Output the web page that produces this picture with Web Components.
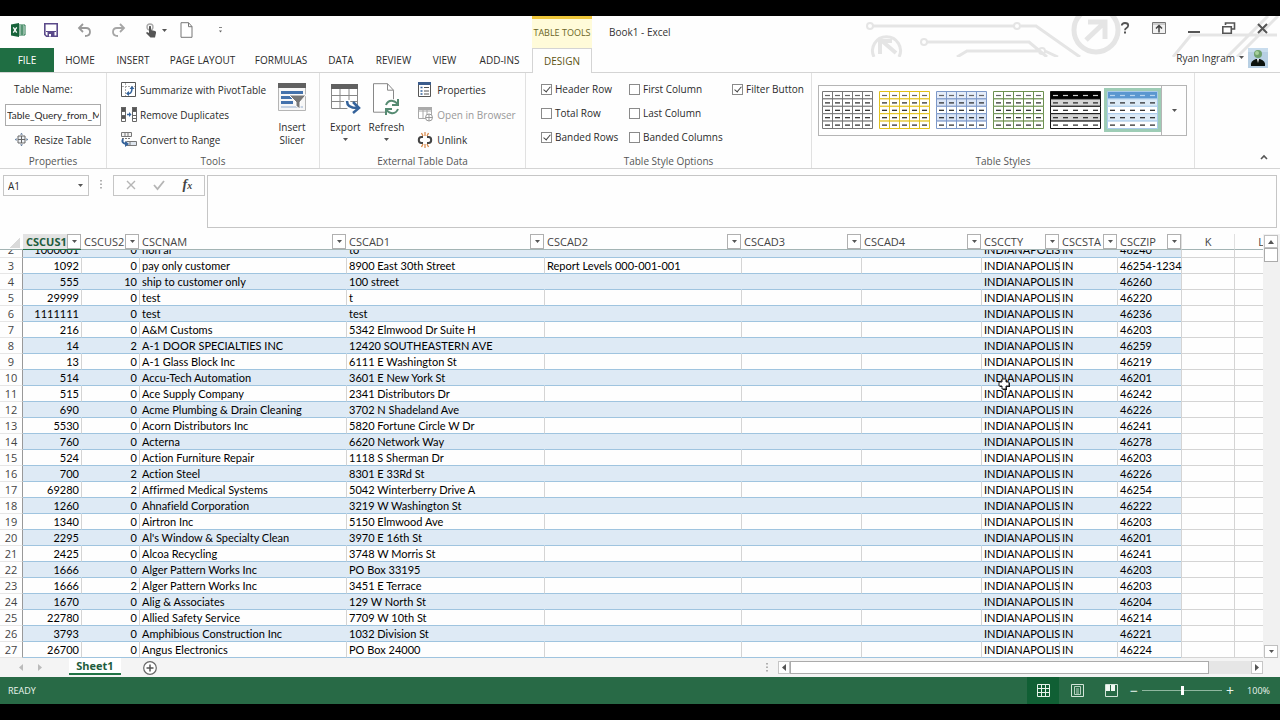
<!DOCTYPE html>
<html lang="en">
<head>
<meta charset="utf-8">
<title>Book1 - Excel</title>
<style>
  body {
    margin: 0;
    background: #000;
    font: 11px/16px "Open Sans", "Noto Sans", sans-serif;
    color: #2b2b2b;
  }
</style>
</head>
<body>
<xl-app></xl-app>

<script>
const icons = {
  excel: [14, 14, `<path d="M7 2h7v10H7z" fill="#fff" stroke="#1f7246"/><path d="M8 4h5M8 6h5M8 8h5M8 10h5M11 2v10" stroke="#1f7246"/><path d="M0 1.5 8 0v14l-8-1.5z" fill="#17633a"/><path d="m2.300 4.300 3.400 5.400m0-5.400L2.300 9.700" stroke="#fff" stroke-width="1.300"/>`],
  save: [14, 14, `<path d="M.8.8h12.400v12.400H2.500L.8 11.500z" fill="#fff" stroke="#5b4a8a" stroke-width="1.600"/><path d="M2 8.500h10" stroke="#5b4a8a"/><path d="M3.500 9h7v4.500h-7z" fill="#5b4a8a"/><path d="M5 11h2v2.500H5z" fill="#fff"/>`],
  undo: [15, 14, `<path d="M6 1 2 5l4 4M2.500 5H9q4 0 4 4t-5 4" fill="none" stroke="#9a9a9a" stroke-width="1.800"/>`],
  redo: [15, 14, `<path d="m9 1 4 4-4 4m3.500-4H6Q2 5 2 9t5 4" fill="none" stroke="#a6a6a6" stroke-width="1.800"/>`],
  touch: [12, 15, `<circle cx="5" cy="4" r="3" fill="none" stroke="#aaa" stroke-width="1.400"/><path d="M4 3.500q1-1.500 2 0V7l4 1q1.500.5 1 2l-1 4.500H5.500L1 10l1-1 2 1z" fill="#555"/>`],
  page: [13, 16, `<path d="M1 .7h7.500L12 4.500v10.800H1z" fill="#fff" stroke="#777"/><path d="M8.500.7v4H12" fill="none" stroke="#777"/>`],
  more: [5, 6, `<path d="M1 .5h3" stroke="#888"/><path d="M1 3.500h3l-1.500 2z" fill="#666"/>`],
  drop: [5, 3, `<path d="M0 0h5L2.500 3z" fill="#555"/>`],
  help: [10, 12, `<path d="M1.800 3.500Q1.800 1 5 1t3.200 2.400Q8.200 4.800 6.500 6 5 6.800 5 8.200" fill="none" stroke="#555" stroke-width="1.800"/><path d="M4 9.500h2v2H4z" fill="#555"/>`],
  display: [14, 12, `<path d="M.5.5h13v11H.5z" fill="#f2f2f2" stroke="#777"/><path d="M1 2h12" stroke="#aaa"/><path d="M7 10.500V4M4 6.500 7 3.500l3 3" fill="none" stroke="#444" stroke-width="1.500"/>`],
  minimize: [12, 12, `<path d="M0 10h12" stroke="#555" stroke-width="2"/>`],
  restore: [13, 12, `<path d="M3.500 3V1h9v6H10" fill="none" stroke="#555" stroke-width="1.600"/><path d="M.8 4.800h8.500v6.400H.8z" fill="#fff" stroke="#555" stroke-width="1.600"/>`],
  close: [11, 11, `<path d="m1 1 9 9m0-9-9 9" stroke="#555" stroke-width="2"/>`],
  avatar: [20, 20, `<path d="M0 0h20v20H0z" fill="#b7cfe3"/><path d="M0 0h20v4H0z" fill="#c8dced"/><path d="M3 18q-1-5 5-7h4q6 2 5 7z" fill="#0c120d"/><circle cx="10" cy="6" r="4" fill="#6fa06c"/><circle cx="9" cy="5" r="2" fill="#a8d09b"/><path d="m9 11 1 4 1-4z" fill="#fff"/>`],
  resize: [13, 13, `<path d="M3 3h7v7H3zM3 6.500h7M6.500 3v7" fill="#eef2f6" stroke="#666"/><path d="m5 1.500 1.500-1.500L8 1.500zM5 11.500 6.500 13 8 11.500zM1.500 5 0 6.500 1.500 8zM11.500 5 13 6.500 11.500 8z" fill="#3c5d85"/>`],
  pivot: [15, 15, `<path d="M.5.5h14v14H.5z" fill="#fff" stroke="#555"/><path d="M4.500 1v13M1 4.500h13" stroke="#aaa" stroke-dasharray="2 1"/><path d="M6 11.500h2.500Q11 11 11 5.500" fill="none" stroke="#35639b" stroke-width="1.600"/><path d="m8.500 7 2.500-3 2.500 3zM8 9l-3 2.500L8 14z" fill="#35639b"/>`],
  duplicates: [16, 15, `<path d="M0 0h5v4H0zM0 9h5v3H0zM11 0h5v4h-5z" fill="#555"/><path d="M.5.5h4v14h-4zM.5 4.500h4m-4 4h4m-4 3h4m7-11h4v14h-4zm0 4h4m-4 4h4m-4 3h4" fill="none" stroke="#666"/><path d="M6 7.500h3" stroke="#35639b" stroke-width="1.500"/><path d="m8 5 2.500 2.500L8 10z" fill="#35639b"/>`],
  range: [16, 15, `<path d="M.5.5h10v4H.5zM4 .5v4M7 .5v4" fill="#f4f4f4" stroke="#777"/><path d="M1 6.500h8" stroke="#777" stroke-dasharray="2 1"/><path d="M5.500 9.500h10v4h-10zM9 9.500v4" fill="#dfe6ef" stroke="#777"/><path d="M2 7q-2 4 3 5" fill="none" stroke="#35639b" stroke-width="2"/><path d="m4 9 4 3-4 3z" fill="#35639b"/>`],
  slicer: [28, 28, `<path d="M.5.5h27v27H.5z" fill="#f7f7f7" stroke="#b5b5b5"/><path d="M0 0h28v5H0z" fill="#606060"/><path d="M3 8h22v3H3zM3 13h13v3H3zM3 18h12v3H3z" fill="#4472ac"/><path d="M3 23h22v2H3z" fill="#c6d2e2"/><path d="M11 12h17l-6 7v7l-4-3v-4z" fill="#777" stroke="#fff"/>`],
  export: [30, 31, `<path d="M1.500 5.500h26v20h-26zM1.500 12.500h26m-26 6h26M10 5.500v20m9-20v20" fill="#fff" stroke="#888"/><path d="M1 1h27v5H1z" fill="#606060"/><path d="M17 17q0 8 9 8" fill="none" stroke="#fff" stroke-width="6"/><path d="M17 18q0 7 10 7M23 19l6 6-6 5" fill="none" stroke="#35639b" stroke-width="2.500"/>`],
  refresh: [28, 32, `<path d="M1.500.7h14l6 6.500v22h-20z" fill="#fff" stroke="#888"/><path d="M15.500.7v6.500h6" fill="none" stroke="#888"/><circle cx="20" cy="24" r="8" fill="#fff"/><path d="M14 22q2-5 7-4 3 .5 5 4m0-6v6h-6M26 26q-2 5-7 4-3-.5-5-4m0 6v-6h6" fill="none" stroke="#568b72" stroke-width="2"/>`],
  properties: [13, 15, `<path d="M.5.5h12v14H.5z" fill="#fff" stroke="#555"/><path d="M0 0h13v3H0z" fill="#3b5c8c"/><path d="M2.500 5.500h2m-2 3.500h2m-2 3h2" stroke="#35639b" stroke-width="1.500"/><path d="M6 5.500h5M6 9h5m-5 3h5" stroke="#555"/>`],
  browser: [15, 15, `<path d="M.5.5h13v11H.5zM5 .5v11M9 .5v11M.5 4h13" fill="#fff" stroke="#a8a8a8"/><path d="M0 0h14v3H0z" fill="#aaa"/><circle cx="11" cy="10.500" r="3.500" fill="#fff" stroke="#999"/><path d="M7.500 10.500h7M11 7v7" stroke="#999"/>`],
  unlink: [14, 16, `<path d="M5 5H3.500Q.8 5 .8 8t2.700 3H5m4-6h1.500q2.700 0 2.700 3t-2.700 3H9" fill="none" stroke="#444" stroke-width="2"/><path d="M7 0v4M3.500 1 5 4m5.500-3L9 4M7 12v4M3.500 15 5 12m5.500 3L9 12" stroke="#d98544" stroke-width="1.200"/>`],
  collapse: [8, 6, `<path d="m1 5 3-3 3 3" fill="none" stroke="#555" stroke-width="1.600"/>`],
  cancel: [10, 10, `<path d="m1 1 8 8m0-8L1 9" stroke="#b5b5b5" stroke-width="1.400"/>`],
  accept: [12, 10, `<path d="m1 5 3.500 4L11 1" fill="none" stroke="#b5b5b5" stroke-width="1.800"/>`],
  dots: [2, 10, `<path d="M1 0v10" stroke="#999" stroke-width="1.500" stroke-dasharray="1.500 2"/>`],
  up: [6, 4, `<path d="M0 4h6L3 0z" fill="#555"/>`],
  left: [4, 7, `<path d="M4 0v7L0 3.500z" fill="currentColor"/>`],
  right: [4, 7, `<path d="M0 0v7l4-3.500z" fill="currentColor"/>`],
  add: [14, 14, `<circle cx="7" cy="7" r="6.300" fill="#fff" stroke="#666" stroke-width="1.200"/><path d="M7 3.500v7M3.500 7h7" stroke="#555" stroke-width="1.500"/>`],
  normal: [13, 13, `<path d="M.5.5h12v12H.5zM4.500.5v12m4-12v12M.5 4.500h12m-12 4h12" fill="none" stroke="#e6f3ea"/>`],
  layout: [13, 13, `<path d="M.5.5h12v12H.5z" fill="none" stroke="#d3e5d9"/><path d="M3.500 2.500h6v8h-6zM5 5h3M5 7h3M5 9h3" fill="none" stroke="#b6d1c0"/>`],
  breaks: [13, 13, `<path d="M.5.5h12v12H.5z" fill="none" stroke="#d3e5d9"/><path d="M1 1h4v6H1zM6 1h4v6H6z" fill="#f1f9f3"/>`],
  cross: [13, 14, `<path d="M5 2h4v3h3v4H9v3H5V9H2V5h3z" fill="#111"/><path d="M4 1h4v3h3v4H8v3H4V8H1V4h3z" fill="#fff" stroke="#222"/>`],
};

class XlIcon extends HTMLElement {
  constructor() {
    super();
    this.attachShadow({ mode: 'open' });
  }

  connectedCallback() {
    const [width, height, body] = icons[this.getAttribute('name')];
    this.shadowRoot.innerHTML = `
      <style>
        :host { display: inline-flex; flex: none; }
        svg { display: block; overflow: visible; }
      </style>
      <svg width="${width}" height="${height}" viewBox="0 0 ${width} ${height}" aria-hidden="true">${body}</svg>
    `;
  }
}
customElements.define('xl-icon', XlIcon);

// Base for the static parts: each subclass supplies its own template
class XlElement extends HTMLElement {
  constructor() {
    super();
    this.attachShadow({ mode: 'open' });
  }

  connectedCallback() {
    this.shadowRoot.innerHTML = `
      <style>
        *, ::before, ::after { box-sizing: border-box; }
        button, input, textarea { font: inherit; color: inherit; margin: 0; border-radius: 0; }
        button { padding: 0; border: 0; background: none; }
        ${this.css}
      </style>
      ${this.template}
    `;
  }
}

customElements.define('xl-title-bar', class extends XlElement {
  get css() {
    return `
      :host { display: flex; height: 32px; position: relative; color: #333; }
      .quick { flex: 0 0 532px; display: flex; align-items: center; padding: 0 0 4px 11px; gap: 19px; }
      .quick button, .last { display: flex; align-items: center; gap: 5px; }
      .last { gap: 13px; }
      .more { margin-left: 12px; }
      .context {
        flex: 0 0 60px;
        border-top: 3px solid #eec63a;
        background: #fffbd9;
        color: #6b6426;
        text-align: center;
        font-size: 9px;
        line-height: 27px;
        white-space: nowrap;
      }
      h1 { margin: 0 auto 0 17px; font-size: 10px; font-weight: 400; line-height: 32px; }
      .window { display: flex; align-items: center; gap: 22px; padding: 0 12px 4px 0; }
    `;
  }

  get template() {
    return `
      <div class="quick">
        <xl-icon name="excel"></xl-icon>
        <button type="button" aria-label="Save"><xl-icon name="save"></xl-icon></button>
        <button type="button" aria-label="Undo"><xl-icon name="undo"></xl-icon></button>
        <button type="button" aria-label="Redo"><xl-icon name="redo"></xl-icon></button>
        <div class="last">
          <button type="button" aria-label="Touch mode"><xl-icon name="touch"></xl-icon><xl-icon name="drop"></xl-icon></button>
          <button type="button" aria-label="New"><xl-icon name="page"></xl-icon></button>
          <button class="more" type="button" aria-label="Customize"><xl-icon name="more"></xl-icon></button>
        </div>
      </div>
      <div class="context">TABLE TOOLS</div>
      <h1>Book1 - Excel</h1>
      <div class="window">
        <button type="button" aria-label="Help"><xl-icon name="help"></xl-icon></button>
        <button type="button" aria-label="Ribbon display options"><xl-icon name="display"></xl-icon></button>
        <button type="button" aria-label="Minimize"><xl-icon name="minimize"></xl-icon></button>
        <button type="button" aria-label="Restore"><xl-icon name="restore"></xl-icon></button>
        <button type="button" aria-label="Close"><xl-icon name="close"></xl-icon></button>
      </div>
    `;
  }
});

customElements.define('xl-tabs', class extends XlElement {
  get css() {
    return `
      :host { display: flex; height: 25px; position: relative; border-bottom: 1px solid #d4d4d4; }
      nav { display: grid; grid-template-columns: 54px 52px 54px 85px 72px 48px 57px 45px 65px 60px; }
      nav button { height: 24px; font-size: 10px; white-space: nowrap; color: #2b2b2b; }
      nav .file { background: #1f6e43; color: #fff; }
      nav .active { height: 25px; border: 1px solid #d4d4d4; border-bottom: 0; background: #fefefe; color: #5c5412; }
      .user { margin-left: auto; padding: 0 12px 5px 0; display: flex; align-items: center; gap: 4px; color: #333; font-size: 10px; }
    `;
  }

  get template() {
    const tabs = ['HOME', 'INSERT', 'PAGE LAYOUT', 'FORMULAS', 'DATA', 'REVIEW', 'VIEW', 'ADD-INS'];
    return `
      <nav>
        <button class="file" type="button">FILE</button>
        ${tabs.map((tab) => `<button type="button">${tab}</button>`).join('')}
        <button class="active" type="button">DESIGN</button>
      </nav>
      <button class="user" type="button">Ryan Ingram <xl-icon name="drop"></xl-icon><xl-icon name="avatar"></xl-icon></button>
    `;
  }
});

customElements.define('xl-group', class extends XlElement {
  get css() {
    return `
      :host {
        display: flex;
        flex-direction: column;
        flex: none;
        box-sizing: border-box;
        width: var(--group-width);
        padding-top: 4px;
        border-right: 1px solid #e1e1e1;
      }
      .body { display: flex; flex: none; height: 76px; }
      .caption { text-align: center; font-size: 10px; line-height: 16px; color: #555; }
    `;
  }

  get template() {
    return `
      <div class="body"><slot></slot></div>
      <div class="caption">${this.getAttribute('caption')}</div>
    `;
  }
});

customElements.define('xl-command', class extends XlElement {
  get css() {
    return `
      :host { display: block; }
      button { display: flex; align-items: center; gap: 3px; height: 25px; white-space: nowrap; font-size: 10px; }
      button:disabled { color: #999; }
      .icon { display: flex; min-width: 16px; }
      :host([large]) button { flex-direction: column; gap: 0; height: 76px; padding-top: 6px; line-height: 13px; }
      :host([large]) .icon { height: 38px; }
      :host([large]) xl-icon[name=drop] { margin-top: 4px; }
    `;
  }

  get template() {
    return `
      <button type="button" ${this.hasAttribute('disabled') ? 'disabled' : ''}>
        <span class="icon"><xl-icon name="${this.getAttribute('icon')}"></xl-icon></span>
        <span><slot></slot></span>
        ${this.hasAttribute('menu') ? '<xl-icon name="drop"></xl-icon>' : ''}
      </button>
    `;
  }
});

customElements.define('xl-check', class extends XlElement {
  get css() {
    return `
      :host { display: block; }
      label { display: flex; align-items: center; gap: 3px; height: 24px; font-size: 10px; white-space: nowrap; }
      input {
        appearance: none;
        width: 11px;
        height: 11px;
        border: 1px solid #8a8a8a;
        background: #fff;
        display: grid;
        place-content: center;
      }
      input:checked::before {
        content: "";
        width: 4px;
        height: 7px;
        border: solid #444;
        border-width: 0 1px 1px 0;
        transform: translateY(-1px) rotate(40deg);
      }
    `;
  }

  get template() {
    return `<label><input type="checkbox" ${this.hasAttribute('checked') ? 'checked' : ''}><slot></slot></label>`;
  }
});

customElements.define('xl-table-style', class extends XlElement {
  get css() {
    return `
      :host { display: block; }
      button { display: block; padding: 3px; background: #fff; }
      :host([selected]) button { background: #9dccb5; }
      svg { display: block; }
    `;
  }

  get template() {
    const line = this.getAttribute('line');
    const head = this.getAttribute('head') || '#fff';
    const band = this.getAttribute('band') || '#fff';
    const dash = this.getAttribute('dash') || '#666';
    let rows = '';
    for (let row = 0; row < 5; row++) {
      const y = row * 7.4 + 0.5;
      const fill = row === 0 ? head : row % 2 ? band : '#fff';
      rows += `<path d="M.5 ${y}h50v7.400H.5z" fill="${fill}" stroke="${line}"/>`;
      for (let col = 0; col < 5; col++) {
        rows += `<path d="M${col * 10 + 3} ${y + 4}h5" stroke="${row === 0 ? dash : '#222'}" stroke-width="1.200"/>`;
      }
    }
    const columns = this.hasAttribute('columns')
      ? `<path d="M10.500 0v38M20.500 0v38M30.500 0v38M40.500 0v38" stroke="${line}"/>` : '';
    return `
      <button type="button" aria-label="${this.getAttribute('label')}">
        <svg width="51" height="38" viewBox="0 0 51 38">${rows}${columns}</svg>
      </button>
    `;
  }
});

customElements.define('xl-ribbon', class extends XlElement {
  get css() {
    return `
      :host { display: flex; height: 96px; border-bottom: 1px solid #d4d4d4; }
      .name { padding: 0 5px; width: 106px; font-size: 10px; }
      .name label { display: block; line-height: 25px; padding-left: 9px; }
      .name input { display: block; width: 96px; height: 22px; margin: 2px 0 1px; padding: 0 1px; border: 1px solid #ababab; font-family: Lato, sans-serif; font-size: 10px; }
      .name xl-command { padding-left: 10px; }
      .tools { flex: none; padding-left: 14px; width: 171px; }
      .external { padding: 0 14px 0 10px; display: flex; gap: 8px; }
      .options { display: grid; grid-template-columns: 88px 103px 1fr; padding-left: 15px; }
      .gallery {
        display: flex;
        height: 51px;
        margin: 8px 0 0 6px;
        padding: 2px 0 0 0;
        border: 1px solid #b5b5b5;
      }
      .gallery > button { width: 25px; margin-top: -2px; border-left: 1px solid #b5b5b5; display: grid; place-content: center; }
      .collapse { margin: auto 12px 4px auto; }
    `;
  }

  get template() {
    return `
      <xl-group caption="Properties" style="--group-width: 107px">
        <div class="name">
          <label for="table-name">Table Name:</label>
          <input id="table-name" type="text" value="Table_Query_from_M">
          <xl-command icon="resize">Resize Table</xl-command>
        </div>
      </xl-group>
      <xl-group caption="Tools" style="--group-width: 213px">
        <div class="tools">
          <xl-command icon="pivot">Summarize with PivotTable</xl-command>
          <xl-command icon="duplicates">Remove Duplicates</xl-command>
          <xl-command icon="range">Convert to Range</xl-command>
        </div>
        <xl-command large icon="slicer">Insert<br>Slicer</xl-command>
      </xl-group>
      <xl-group caption="External Table Data" style="--group-width: 206px">
        <div class="external">
          <xl-command large menu icon="export">Export</xl-command>
          <xl-command large menu icon="refresh">Refresh</xl-command>
        </div>
        <div>
          <xl-command icon="properties">Properties</xl-command>
          <xl-command icon="browser" disabled>Open in Browser</xl-command>
          <xl-command icon="unlink">Unlink</xl-command>
        </div>
      </xl-group>
      <xl-group caption="Table Style Options" style="--group-width: 286px">
        <div class="options">
          <div>
            <xl-check checked>Header Row</xl-check>
            <xl-check>Total Row</xl-check>
            <xl-check checked>Banded Rows</xl-check>
          </div>
          <div>
            <xl-check>First Column</xl-check>
            <xl-check>Last Column</xl-check>
            <xl-check>Banded Columns</xl-check>
          </div>
          <xl-check checked>Filter Button</xl-check>
        </div>
      </xl-group>
      <xl-group caption="Table Styles" style="--group-width: 383px">
        <div class="gallery">
          <xl-table-style label="Light" line="#777" columns></xl-table-style>
          <xl-table-style label="Yellow" line="#e0c01c" columns></xl-table-style>
          <xl-table-style label="Blue" line="#7c98c8" band="#dbe5f6" head="#e6edf9" columns></xl-table-style>
          <xl-table-style label="Green" line="#6d9150" columns></xl-table-style>
          <xl-table-style label="Black" line="#111" head="#000" band="#d5d5d5" dash="#ccc"></xl-table-style>
          <xl-table-style label="Light blue" line="#a9cbea" head="#5b97d0" band="#ddebf7" dash="#b8d5ef" selected></xl-table-style>
          <button type="button" aria-label="More styles"><xl-icon name="drop"></xl-icon></button>
        </div>
      </xl-group>
      <button class="collapse" type="button" aria-label="Collapse ribbon"><xl-icon name="collapse"></xl-icon></button>
    `;
  }
});

customElements.define('xl-formula-bar', class extends XlElement {
  get css() {
    return `
      :host { display: flex; align-items: flex-start; padding: 6px 3px 6px; height: 65px; box-sizing: border-box; }
      .name-box, .actions { display: flex; align-items: center; height: 21px; border: 1px solid #c6c6c6; }
      .name-box { width: 86px; }
      .name-box input { flex: 1; min-width: 0; height: 16px; border: 0; padding: 0 4px; font-size: 10px; background: none; }
      .name-box button { display: flex; padding: 0 5px; }
      .dots { margin: 5px 11px 0; }
      .actions { width: 92px; justify-content: space-around; padding: 0 3px; margin-right: 2px; }
      .fx { font: italic 700 14px/16px "Liberation Serif", serif; color: #444; }
      .fx small { font-size: 10px; }
      textarea { flex: 1; height: 53px; resize: none; border: 1px solid #c6c6c6; background: #fefefe; }
    `;
  }

  get template() {
    return `
      <div class="name-box">
        <input type="text" value="A1" aria-label="Name box">
        <button type="button" aria-label="Names"><xl-icon name="drop"></xl-icon></button>
      </div>
      <xl-icon class="dots" name="dots"></xl-icon>
      <div class="actions">
        <button type="button" aria-label="Cancel"><xl-icon name="cancel"></xl-icon></button>
        <button type="button" aria-label="Enter"><xl-icon name="accept"></xl-icon></button>
        <button class="fx" type="button">f<small>x</small></button>
      </div>
      <textarea aria-label="Formula"></textarea>
    `;
  }
});

const columns = [
  ['CSCUS1', 58], ['CSCUS2', 58], ['CSCNAM', 207], ['CSCAD1', 198], ['CSCAD2', 197], ['CSCAD3', 120],
  ['CSCAD4', 120], ['CSCCTY', 78], ['CSCSTA', 58], ['CSCZIP', 64],
];

// cus1 | cus2 | name | address 1 | zip | address 2
const customers = `1000001|0|non ar|to|46240
1092|0|pay only customer|8900 East 30th Street|46254-1234|Report Levels 000-001-001
555|10|ship to customer only|100 street|46260
29999|0|test|t|46220
1111111|0|test|test|46236
216|0|A&amp;M Customs|5342 Elmwood Dr Suite H|46203
14|2|A-1 DOOR SPECIALTIES INC|12420 SOUTHEASTERN AVE|46259
13|0|A-1 Glass Block Inc|6111 E Washington St|46219
514|0|Accu-Tech Automation|3601 E New York St|46201
515|0|Ace Supply Company|2341 Distributors Dr|46242
690|0|Acme Plumbing &amp; Drain Cleaning|3702 N Shadeland Ave|46226
5530|0|Acorn Distributors Inc|5820 Fortune Circle W Dr|46241
760|0|Acterna|6620 Network Way|46278
524|0|Action Furniture Repair|1118 S Sherman Dr|46203
700|2|Action Steel|8301 E 33Rd St|46226
69280|2|Affirmed Medical Systems|5042 Winterberry Drive A|46254
1260|0|Ahnafield Corporation|3219 W Washington St|46222
1340|0|Airtron Inc|5150 Elmwood Ave|46203
2295|0|Al's Window &amp; Specialty Clean|3970 E 16th St|46201
2425|0|Alcoa Recycling|3748 W Morris St|46241
1666|0|Alger Pattern Works Inc|PO Box 33195|46203
1666|2|Alger Pattern Works Inc|3451 E Terrace|46203
1670|0|Alig &amp; Associates|129 W North St|46204
22780|0|Allied Safety Service|7709 W 10th St|46214
3793|0|Amphibious Construction Inc|1032 Division St|46221
26700|0|Angus Electronics|PO Box 24000|46224`.split('\n').map((row) => row.split('|'));

customElements.define('xl-grid', class extends XlElement {
  scrollRows(offset) {
    this.shadowRoot.querySelector('.sheet').scrollTop = offset;
  }

  get css() {
    return `
      :host { display: flex; position: relative; }
      .sheet { flex: 1; min-width: 0; overflow: hidden; }
      table { table-layout: fixed; border-collapse: separate; border-spacing: 0; width: 1287px; }
      th, td { height: 16px; padding: 0 2px; line-height: 15px; white-space: nowrap; font-weight: 400; }
      thead th { position: sticky; top: 0; padding: 0; background: #fefefe; border-bottom: 1px solid #a3b4b4; text-align: left; color: #444; }
      thead th.letter { text-align: center; border-left: 1px solid #e0e0e0; }
      thead th:nth-child(2) { background: #e3e3e3; border-bottom-color: #217346; color: #1e5c3c; font-weight: 700; }
      .head { display: flex; justify-content: space-between; height: 15px; padding-left: 3px; }
      .head span { flex: 1; min-width: 0; }
      .head button { flex: none; position: relative; width: 14px; height: 15px; border: 1px solid #b0b0b0; background: #fff; display: grid; place-content: center; }
      .corner { display: block; width: 10px; height: 10px; margin: 2px 0 0 10px; background: linear-gradient(135deg, transparent 50%, #dadada 50%); }
      tbody th { padding: 0; text-align: center; border-right: 1px solid #999; border-bottom: 1px solid #e6e6e6; color: #444; }
      td { font-family: Lato, sans-serif; font-variant-ligatures: none; color: #000; border-left: 1px solid #d4d4d4; border-bottom: 1px solid #9fc4df; }
      .band td { background: #deeaf5; border-left-color: #deeaf5; }
      td.number { text-align: right; }
      td:nth-child(2) { border-left: 0; }
      tbody .empty { background: #fefefe; border-color: #d4d4d4; }
      .scroll { flex: 0 0 17px; display: flex; flex-direction: column; background: #f1f1f1; padding: 1px 2px 0 1px; }
      .scroll button { height: 13px; border: 1px solid #c0c0c0; background: #fff; display: grid; place-content: center; }
      .thumb { height: 14px; border: 1px solid #ababab; background: #fff; margin-bottom: auto; }
    `;
  }

  get template() {
    const heads = columns.map(([name]) => `
      <th scope="col"><div class="head"><span>${name}</span><button type="button" aria-label="Filter ${name}"><xl-icon name="drop"></xl-icon></button></div></th>
    `).join('');
    const rows = customers.map(([cus1, cus2, name, ad1, zip, ad2 = ''], i) => `
      <tr class="${i % 2 ? '' : 'band'}">
        <th scope="row">${i + 2}</th>
        <td class="number">${cus1}</td><td class="number">${cus2}</td>
        <td>${name}</td><td>${ad1}</td><td>${ad2}</td><td></td><td></td>
        <td>INDIANAPOLIS</td><td>IN</td><td>${zip}</td>
        <td class="empty"></td><td class="empty"></td>
      </tr>
    `).join('');
    return `
      <div class="sheet">
        <table>
          <colgroup>
            <col style="width: 23px">
            ${columns.map(([, width]) => `<col style="width: ${width}px">`).join('')}
            <col style="width: 53px"><col style="width: 53px">
          </colgroup>
          <thead><tr><th><span class="corner"></span></th>${heads}<th class="letter">K</th><th class="letter">L</th></tr></thead>
          <tbody>${rows}</tbody>
        </table>
      </div>
      <div class="scroll">
        <button type="button" aria-label="Scroll up"><xl-icon name="up"></xl-icon></button>
        <div class="thumb"></div>
        <button type="button" aria-label="Scroll down"><xl-icon name="drop"></xl-icon></button>
      </div>
    `;
  }
});

customElements.define('xl-sheet-bar', class extends XlElement {
  get css() {
    return `
      :host { display: flex; align-items: flex-start; height: 19px; background: #f4f4f4; color: #bbb; }
      .nav { display: flex; gap: 15px; padding: 6px 0 0 19px; width: 69px; }
      .nav button { display: flex; }
      .tab { width: 52px; height: 17px; background: #fff; border-bottom: 2px solid #217346; color: #1e5c3c; font-weight: 700; line-height: 15px; }
      .add { margin: 3px auto 0 22px; display: flex; }
      .dots { margin-top: 5px; }
      .scroll { flex: 0 1 485px; display: flex; height: 13px; margin: 3px 17px 0 10px; background: #e6e6e6; color: #555; }
      .scroll button { flex: none; width: 12px; border: 1px solid #c6c6c6; background: #fff; display: grid; place-content: center; }
      .thumb { flex: 0 1 419px; border: 1px solid #ababab; background: #fff; margin-right: auto; }
    `;
  }

  get template() {
    return `
      <div class="nav">
        <button type="button" aria-label="Previous sheet"><xl-icon name="left"></xl-icon></button>
        <button type="button" aria-label="Next sheet"><xl-icon name="right"></xl-icon></button>
      </div>
      <button class="tab" type="button">Sheet1</button>
      <button class="add" type="button" aria-label="New sheet"><xl-icon name="add"></xl-icon></button>
      <xl-icon class="dots" name="dots"></xl-icon>
      <div class="scroll">
        <button type="button" aria-label="Scroll left"><xl-icon name="left"></xl-icon></button>
        <div class="thumb"></div>
        <button type="button" aria-label="Scroll right"><xl-icon name="right"></xl-icon></button>
      </div>
    `;
  }
});

customElements.define('xl-status-bar', class extends XlElement {
  get css() {
    return `
      :host { display: flex; align-items: center; height: 27px; background: #286a46; color: #eaf5ee; font-size: 9px; padding-right: 10px; }
      .ready { margin: 0 auto 0 8px; }
      .view { width: 32px; height: 27px; display: grid; place-content: center; margin-right: 2px; }
      .view.active { background: #105f34; }
      .zoom { font-size: 14px; width: 10px; }
      input { appearance: none; width: 80px; height: 10px; margin: 0 3px; background: linear-gradient(#8fb79f, #8fb79f) center / 100% 1px no-repeat; }
      input::-webkit-slider-thumb { appearance: none; width: 3px; height: 9px; background: #fff; }
      output { margin-left: 12px; }
    `;
  }

  get template() {
    return `
      <span class="ready">READY</span>
      <button class="view active" type="button" aria-label="Normal"><xl-icon name="normal"></xl-icon></button>
      <button class="view" type="button" aria-label="Page layout"><xl-icon name="layout"></xl-icon></button>
      <button class="view" type="button" aria-label="Page break preview"><xl-icon name="breaks"></xl-icon></button>
      <button class="zoom" type="button" aria-label="Zoom out">−</button>
      <input type="range" min="0" max="200" value="100" aria-label="Zoom">
      <button class="zoom" type="button" aria-label="Zoom in">+</button>
      <output>100%</output>
    `;
  }
});

// defined last, so the grid already has its real height when it scrolls
customElements.define('xl-app', class extends XlElement {
  connectedCallback() {
    super.connectedCallback();
    this.shadowRoot.querySelector('xl-grid').scrollRows(8);
  }

  get css() {
    return `
      :host {
        display: flex;
        flex-direction: column;
        box-sizing: border-box;
        height: 100vh;
        padding: 16px 0;
      }
      .window {
        flex: 1;
        min-height: 0;
        display: flex;
        flex-direction: column;
        position: relative;
        overflow: hidden;
        background: #fefefe;
      }
      xl-grid { flex: 1; min-height: 0; }
      .art { position: absolute; top: 0; right: 0; }
      .pointer { position: absolute; left: 998px; top: 362px; }
    `;
  }

  get template() {
    return `
      <div class="window">
        <svg class="art" width="420" height="41" viewBox="0 0 420 41" fill="none" stroke="#e5e5e5" stroke-width="3" aria-hidden="true">
          <circle cx="10" cy="10" r="3" stroke-width="2"/>
          <path d="M13 10h141M161 10h15l44 31"/>
          <circle cx="157" cy="10" r="3" stroke-width="2"/>
          <circle cx="64" cy="26" r="3" stroke-width="2"/>
          <path d="M67 26h102l18 15M97 41l10-6h71M185 35l13 6"/>
          <circle cx="182" cy="35" r="3" stroke-width="2"/>
          <path d="M14 41a14 14 0 1 1 25 0"/>
          <path d="m36 37-14-12m-2 13V25h12" stroke-width="4"/>
          <circle cx="236" cy="14" r="22" stroke-width="5"/>
          <path d="m226 24 19-18m-17 0h17v17" stroke-width="5"/>
          <path d="M313 41l18-22h86M367 41l41-41M377 41l41-41"/>
        </svg>
        <xl-title-bar></xl-title-bar>
        <xl-tabs></xl-tabs>
        <xl-ribbon></xl-ribbon>
        <xl-formula-bar></xl-formula-bar>
        <xl-grid></xl-grid>
        <xl-sheet-bar></xl-sheet-bar>
        <xl-status-bar></xl-status-bar>
        <xl-icon class="pointer" name="cross"></xl-icon>
      </div>
    `;
  }
});
</script>
</body>
</html>
